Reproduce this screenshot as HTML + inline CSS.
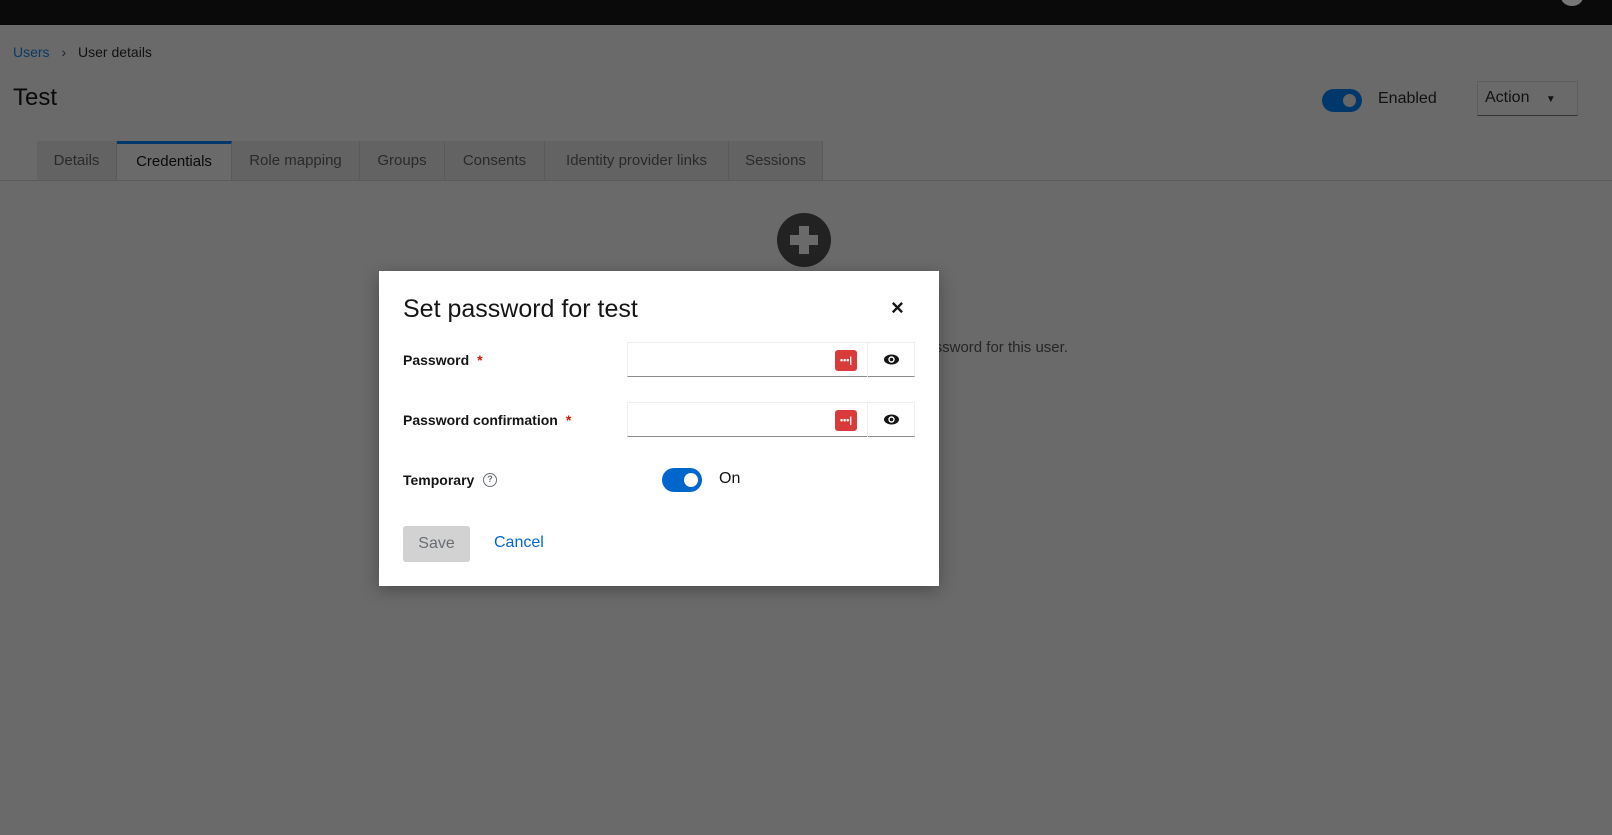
<!DOCTYPE html>
<html><head><meta charset="utf-8"><style>
*{box-sizing:border-box;margin:0;padding:0}
body{width:1612px;height:835px;overflow:hidden;background:#6a6a6a;font-family:"Liberation Sans",sans-serif;position:relative;color:#0a0a0a}
.abs{position:absolute}
.hdr{left:0;top:0;width:1612px;height:25px;background:#0a0a0a}
.tab{position:absolute;top:141px;height:40px;background:#636363;border-right:1px solid #5a5a5a;color:#2a2a2a;font-size:15px;line-height:40px;text-align:center}
.modal{left:379px;top:271px;width:560px;height:315px;background:#fff;box-shadow:0 4px 16px rgba(0,0,0,.3)}
.lbl{position:absolute;font-size:14px;font-weight:bold;color:#151515}
.req{color:#c9190b;margin-left:8px}
.inp{position:absolute;left:248px;width:288px;height:35px;border:1px solid #eee;border-bottom:1px solid #8a8d90}
.eye{position:absolute;right:0;top:0;width:47px;height:34px;border-left:1px solid #eee}
.lp{position:absolute;left:207px;top:7px;width:22px;height:21px;background:#d93a3a;border-radius:3px;color:#fff;font-size:9px;line-height:21px;text-align:center;font-weight:bold;letter-spacing:0}
</style></head><body>
<div class="abs hdr"></div>
<div class="abs" style="left:1561px;top:-12px;width:22px;height:18px;border-radius:50%;background:#777"></div>
<div class="abs" style="left:13px;top:44px;font-size:14px"><span style="color:#0a3a66">Users</span> <span style="color:#222;margin:0 8px">›</span> <span style="color:#111">User details</span></div>
<div class="abs" style="left:13px;top:84px;font-size:24px;color:#0a0a0a">Test</div>
<div class="abs" style="left:1322px;top:89px;width:40px;height:23px;border-radius:12px;background:#00386b"></div>
<div class="abs" style="left:1343px;top:94px;width:13px;height:13px;border-radius:50%;background:#666"></div>
<div class="abs" style="left:1378px;top:90px;font-size:16px;color:#111">Enabled</div>
<div class="abs" style="left:1477px;top:81px;width:101px;height:35px;border:1px solid #5d5d5d;border-bottom:1px solid #333;color:#111;font-size:16px;padding:7px 7px">Action <span style="font-size:10px;margin-left:12px">▼</span></div>
<div class="tab" style="left:37px;width:80px">Details</div>
<div class="tab" style="left:117px;width:115px;background:#6a6a6a;color:#0a0a0a;border-top:3px solid #00386b;line-height:36px">Credentials</div>
<div class="tab" style="left:232px;width:128px">Role mapping</div>
<div class="tab" style="left:360px;width:85px">Groups</div>
<div class="tab" style="left:445px;width:100px">Consents</div>
<div class="tab" style="left:545px;width:184px">Identity provider links</div>
<div class="tab" style="left:729px;width:94px">Sessions</div>
<div class="abs" style="left:0;top:180px;width:1612px;height:1px;background:#5a5a5a"></div>
<div class="abs" style="left:777px;top:213px;width:54px;height:54px;border-radius:50%;background:#222"></div>
<div class="abs" style="left:790px;top:235px;width:28px;height:10px;background:#6a6a6a"></div>
<div class="abs" style="left:799px;top:226px;width:10px;height:28px;background:#6a6a6a"></div>
<div class="abs" style="left:560px;top:339px;width:508px;text-align:right;font-size:15px;color:#262626">Click above button to set a password for this user.</div>

<div class="abs modal">
 <div class="abs" style="left:24px;top:24px;font-size:25px;color:#151515">Set password for test</div>
 <div class="abs" style="left:512px;top:24px;font-size:22px;font-weight:bold;color:#151515">×</div>
 <div class="lbl" style="left:24px;top:81px">Password<span class="req">*</span></div>
 <div class="inp" style="top:71px"><div class="lp">•••|</div><div class="eye"><svg style="position:absolute;left:15px;top:10px" width="17" height="13" viewBox="0 0 17 13"><ellipse cx="8.5" cy="6.5" rx="7.5" ry="5" fill="#151515"/><circle cx="8.5" cy="6.5" r="3.2" fill="#fff"/><circle cx="8.5" cy="6.5" r="1.8" fill="#151515"/></svg></div></div>
 <div class="lbl" style="left:24px;top:141px">Password confirmation<span class="req">*</span></div>
 <div class="inp" style="top:131px"><div class="lp">•••|</div><div class="eye"><svg style="position:absolute;left:15px;top:10px" width="17" height="13" viewBox="0 0 17 13"><ellipse cx="8.5" cy="6.5" rx="7.5" ry="5" fill="#151515"/><circle cx="8.5" cy="6.5" r="3.2" fill="#fff"/><circle cx="8.5" cy="6.5" r="1.8" fill="#151515"/></svg></div></div>
 <div class="lbl" style="left:24px;top:201px">Temporary</div>
 <div class="abs" style="left:104px;top:202px;width:14px;height:14px;border:1.5px solid #6a6e73;border-radius:50%;font-size:9px;text-align:center;line-height:11px;color:#6a6e73;font-weight:bold">?</div>
 <div class="abs" style="left:283px;top:197px;width:40px;height:24px;border-radius:12px;background:#0066cc"></div>
 <div class="abs" style="left:305px;top:202px;width:14px;height:14px;border-radius:50%;background:#fff"></div>
 <div class="abs" style="left:340px;top:199px;font-size:16px;color:#151515">On</div>
 <div class="abs" style="left:24px;top:255px;width:67px;height:36px;background:#d2d2d2;border-radius:3px;color:#6a6e73;font-size:16px;text-align:center;line-height:36px">Save</div>
 <div class="abs" style="left:115px;top:263px;font-size:16px;color:#0066cc">Cancel</div>
</div>
</body></html>
